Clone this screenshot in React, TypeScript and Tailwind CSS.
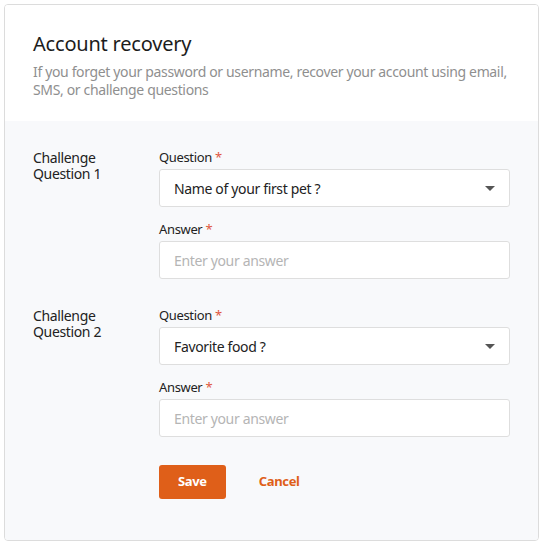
import React from "react";

const questions = [
  { id: 1, label: "Question 1", value: "Name of your first pet ?" },
  { id: 2, label: "Question 2", value: "Favorite food ?" },
];

function Label({ text }: { text: string }) {
  return (
    <div className="text-[13px] leading-4 text-[#222]">
      {text}
      <span className="ml-[3px] text-[#e0573f]">*</span>
    </div>
  );
}

export default function App() {
  return (
    <div className="min-h-[543px] bg-white p-1 font-['Noto_Sans',sans-serif] tracking-[-0.35px]">
      <div className="border border-[#dcdcdc] rounded-sm overflow-hidden">
        {/* Header */}
        <div className="bg-white px-7 pt-[25px] pb-[22px]">
          <h2 className="text-[20px] leading-7 text-[#1c1c1c] tracking-[-0.2px]">Account recovery</h2>
          <p className="mt-[5px] text-[14px] leading-[18px] text-[#8f8f8f]">
            If you forget your password or username, recover your account using email, SMS, or challenge questions
          </p>
        </div>

        {/* Body */}
        <div className="bg-[#f8f9fb] px-7 pt-[28px] pb-[41px]">
          <div className="flex flex-col gap-[28px]">
            {questions.map((q) => (
              <div key={q.id} className="flex">
                <div className="w-[126px] shrink-0 text-[14px] leading-[17px] text-[#222]">
                  <div>Challenge</div>
                  <div className="-mt-px">{q.label}</div>
                </div>
                <div className="flex-1 flex flex-col">
                  <Label text="Question" />
                  <div className="mt-[4px] h-[38px] bg-white border border-[#dedede] rounded-[3px] flex items-center justify-between pl-[14px] pr-[14px]">
                    <span className="text-[14px] text-[#222]">{q.value}</span>
                    <svg width="10" height="5" viewBox="0 0 10 5">
                      <path d="M0 0h10L5 5z" fill="#555" />
                    </svg>
                  </div>
                  <div className="mt-[14px]">
                    <Label text="Answer" />
                  </div>
                  <div className="mt-[4px] h-[38px] bg-white border border-[#dedede] rounded-[3px] flex items-center pl-[14px]">
                    <span className="text-[14px] text-[#b5b5b5]">Enter your answer</span>
                  </div>
                </div>
              </div>
            ))}
          </div>

          <div className="flex items-center ml-[126px] mt-[28px] gap-[33px]">
            <button className="h-[34px] px-[19px] bg-[#df5f19] text-white text-[13px] font-bold rounded-[3px]">
              Save
            </button>
            <button className="text-[13px] font-bold text-[#df5f19]">Cancel</button>
          </div>
        </div>
      </div>
    </div>
  );
}
